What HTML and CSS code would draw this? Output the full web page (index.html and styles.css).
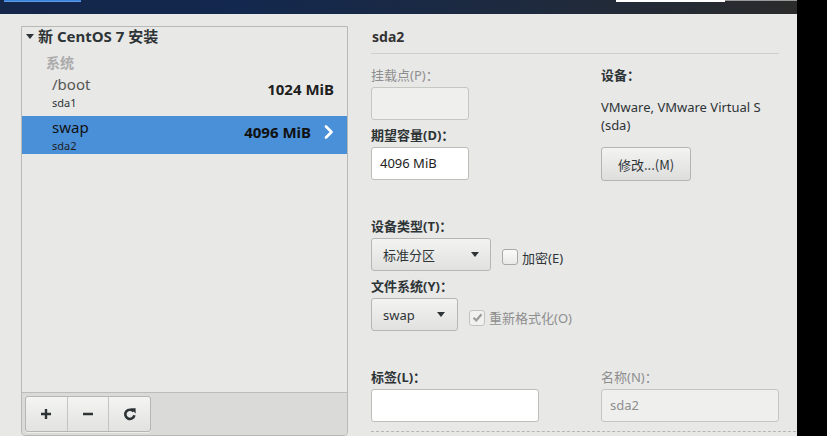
FILE: index.html
```html
<!DOCTYPE html>
<html lang="zh">
<head>
<meta charset="utf-8">
<title>手动分区</title>
<link rel="stylesheet" href="styles.css">
</head>
<body>
<div class="screen">
  <div class="app">
    <div class="topbar">
      <div class="top-btn"></div>
      <div class="top-spacer"></div>
      <div class="top-field"></div>
      <div class="top-grey"></div>
    </div>
    <div class="main">
      <div class="side">
        <div class="tree">
          <div class="tree-head"><span class="tri"></span><span>新 CentOS 7 安装</span></div>
          <div class="group">系统</div>
          <div class="row">
            <div class="row-names">
              <div class="mount">/boot</div>
              <div class="dev">sda1</div>
            </div>
            <div class="size">1024 MiB</div>
          </div>
          <div class="row selected">
            <div class="row-names">
              <div class="mount">swap</div>
              <div class="dev">sda2</div>
            </div>
            <div class="size">4096 MiB</div>
            <svg class="chev" width="10" height="14" viewBox="0 0 10 14"><path d="M2 1.5 L7.5 7 L2 12.5" fill="none" stroke="#fff" stroke-width="2.6" stroke-linecap="round" stroke-linejoin="round"/></svg>
          </div>
        </div>
        <div class="toolbar">
          <div class="tool-group">
            <button class="tool"><svg width="12" height="12" viewBox="0 0 12 12"><path d="M6 1V11M1 6H11" stroke="#2e3436" stroke-width="2.4"/></svg></button>
            <button class="tool"><svg width="12" height="12" viewBox="0 0 12 12"><path d="M1 6H11" stroke="#2e3436" stroke-width="2.4"/></svg></button>
            <button class="tool"><svg width="14" height="14" viewBox="0 0 14 14"><path d="M10.6 4.6 A4.6 4.6 0 1 0 11.4 8.2" fill="none" stroke="#2e3436" stroke-width="2.6"/><path d="M7.4 1.2 L12.6 1.2 L12.6 6.4 Z" fill="#2e3436"/></svg></button>
          </div>
        </div>
      </div>
      <div class="pane">
        <div class="pane-title">sda2</div>
        <div class="rule"></div>
        <div class="cols cols-top">
          <div class="col-left">
            <div class="label dim">挂载点(P)：</div>
            <div class="entry disabled short"></div>
            <div class="label bold gap-s">期望容量(D)：</div>
            <div class="entry short">4096 MiB</div>
          </div>
          <div class="col-right">
            <div class="label bold">设备：</div>
            <div class="device-text">VMware, VMware Virtual S<br>(sda)</div>
            <button class="btn modify">修改...(M)</button>
          </div>
        </div>
        <div class="label bold gap-l">设备类型(T)：</div>
        <div class="line">
          <div class="combo combo-type"><span>标准分区</span><span class="arrow"></span></div>
          <label class="check"><span class="box"></span><span>加密(E)</span></label>
        </div>
        <div class="label bold gap-s">文件系统(Y)：</div>
        <div class="line">
          <div class="combo combo-fs"><span>swap</span><span class="arrow"></span></div>
          <label class="check disabled"><span class="box checked"><svg width="13" height="13" viewBox="0 0 13 13"><path d="M2.5 6.8 L5.3 9.5 L10.5 3.3" fill="none" stroke="#9a9a9a" stroke-width="2.2"/></svg></span><span>重新格式化(O)</span></label>
        </div>
        <div class="cols gap-l2">
          <div class="col-left">
            <div class="label bold">标签(L)：</div>
            <div class="entry medium"></div>
          </div>
          <div class="col-right">
            <div class="label dim">名称(N)：</div>
            <div class="entry disabled wide">sda2</div>
          </div>
        </div>
        <div class="dashed"></div>
      </div>
    </div>
  </div>
  <div class="blackbar"></div>
</div>
</body>
</html>
```
FILE: styles.css
```css
* { box-sizing: border-box; }
html, body {
  margin: 0;
  padding: 0;
  width: 827px;
  height: 436px;
  overflow: hidden;
}
body {
  font-family: "Noto Sans", "Noto Sans CJK SC", sans-serif;
  color: #2e3436;
  background: #000;
}
.screen {
  display: flex;
  width: 827px;
  height: 436px;
}
.app {
  width: 797px;
  height: 436px;
  background: #e8e8e7;
  display: flex;
  flex-direction: column;
  overflow: hidden;
}
.blackbar {
  width: 30px;
  background: #000;
}
.topbar {
  height: 14px;
  flex: none;
  display: flex;
  align-items: flex-start;
  background: linear-gradient(90deg, #14264a 0%, #13284e 30%, #1f2a3c 70%, #2b2b2b 100%);
}
.top-btn {
  margin-left: 4px;
  width: 77px;
  height: 2px;
  background: #3a82d8;
  border-bottom: 1px solid #5a9ae6;
}
.top-spacer { flex: 1; }
.top-field {
  width: 109px;
  height: 2px;
  background: #fff;
}
.top-grey {
  width: 72px;
  height: 1px;
  background: #9a9a9a;
}
.main {
  flex: 1;
  display: flex;
  align-items: flex-start;
}
.side {
  margin-left: 21px;
  margin-top: 12px;
  width: 327px;
  height: 410px;
  border: 1px solid #b8b8b6;
  border-radius: 0 0 4px 4px;
  display: flex;
  flex-direction: column;
  background: #e8e8e7;
}
.tree { flex: 1; }
.tree-head {
  height: 20px;
  margin-top: -1px;
  display: flex;
  align-items: center;
  font-size: 15px;
  font-weight: 700;
  line-height: 20px;
  padding-left: 4px;
}
.tri {
  width: 0;
  height: 0;
  border-left: 4.5px solid transparent;
  border-right: 4.5px solid transparent;
  border-top: 5px solid #2e3436;
  margin-right: 4px;
}
.group {
  margin-top: 7px;
  padding-left: 24px;
  font-size: 14px;
  font-weight: 700;
  color: #ababab;
  line-height: 20px;
}
.row {
  display: flex;
  align-items: flex-start;
  height: 43px;
  padding: 2px 13px 0 30px;
}
.row-names { flex: 1; }
.mount {
  font-size: 15px;
  line-height: 19px;
  color: #555753;
}
.dev {
  font-size: 11px;
  line-height: 15px;
  color: #2e3436;
  margin-top: 1px;
}
.size {
  font-size: 15px;
  font-weight: 700;
  line-height: 20px;
  margin-top: 4px;
  color: #1e1e1e;
}
.selected {
  height: 38px;
  background: #4a90d9;
}
.selected .mount { color: #111; }
.selected .dev { color: #1e1e1e; }
.selected .size { margin-right: 13px; color: #111; }
.chev { display: block; margin-top: 7px; }
.toolbar {
  height: 43px;
  border-top: 1px solid #bcbcba;
  background: #dadad9;
  padding: 3px 0 0 3px;
  border-radius: 0 0 4px 4px;
}
.tool-group {
  display: flex;
  width: 126px;
  height: 36px;
  border: 1px solid #b6b6b4;
  border-radius: 3px;
  overflow: hidden;
  background: linear-gradient(#f4f4f3, #e2e2e1);
  box-shadow: 0 1px 0 rgba(255,255,255,0.5);
}
.tool {
  flex: 1;
  border: 0;
  border-right: 1px solid #c4c4c2;
  background: transparent;
  display: flex;
  align-items: center;
  justify-content: center;
  padding: 0;
}
.tool:last-child { border-right: 0; }
.pane {
  margin-left: 23px;
  width: 425px;
  display: flex;
  flex-direction: column;
}
.pane-title {
  margin-top: 14px;
  font-size: 14px;
  font-weight: 700;
  line-height: 18px;
  color: #333;
  padding-left: 1px;
}
.rule {
  margin-top: 7px;
  width: 408px;
  height: 1px;
  background: #cfcfcd;
}
.cols { display: flex; }
.cols-top { margin-top: 12px; }
.col-left { width: 230px; display: flex; flex-direction: column; }
.col-right { flex: 1; display: flex; flex-direction: column; }
.label {
  font-size: 13px;
  line-height: 18px;
  height: 18px;
  margin-bottom: 3px;
  white-space: nowrap;
}
.bold { font-weight: 700; color: #2e3436; }
.dim { color: #8e8e8e; }
.gap-s { margin-top: 6px; }
.gap-l { margin-top: 36px; }
.gap-l2 { margin-top: 37px; }
.entry {
  height: 33px;
  border: 1px solid #bdbdbb;
  border-radius: 3px;
  background: #fff;
  font-size: 13px;
  line-height: 31px;
  padding-left: 8px;
  color: #222;
}
.entry.disabled {
  background: #efefee;
  color: #8e8e8e;
  border-color: #c6c6c4;
}
.short { width: 98px; }
.medium { width: 168px; }
.wide { width: 178px; }
.device-text {
  margin-top: 11px;
  font-size: 13px;
  line-height: 18px;
  color: #2e3436;
}
.btn {
  margin-top: 13px;
  width: 90px;
  height: 34px;
  border: 1px solid #b4b4b2;
  border-radius: 3px;
  background: linear-gradient(#f3f3f2, #dededd);
  font-family: "Noto Sans CJK SC", "Noto Sans", sans-serif;
  font-size: 13px;
  color: #2e3436;
  padding: 0;
}
.line {
  display: flex;
  align-items: center;
}
.combo {
  height: 33px;
  border: 1px solid #b6b6b4;
  border-radius: 3px;
  background: linear-gradient(#f3f3f2, #e1e1e0);
  display: flex;
  align-items: center;
  justify-content: space-between;
  font-size: 13px;
  color: #2e3436;
}
.combo-type { width: 120px; padding: 0 11px 0 11px; }
.combo-fs { width: 87px; padding: 0 12px 0 11px; }
.arrow {
  width: 0;
  height: 0;
  border-left: 4.5px solid transparent;
  border-right: 4.5px solid transparent;
  border-top: 5px solid #2e3436;
}
.check {
  display: flex;
  align-items: center;
  font-size: 13px;
  margin-left: 11px;
  margin-top: 5px;
  color: #2e3436;
}
.box {
  width: 16px;
  height: 16px;
  border: 1px solid #a9a9a7;
  border-radius: 3px;
  background: linear-gradient(#fbfbfb, #e9e9e8);
  margin-right: 4px;
  display: flex;
  align-items: center;
  justify-content: center;
}
.check.disabled { color: #8e8e8e; margin-left: 11px; margin-top: 6px; }
.check.disabled .box { border-color: #c2c2c0; background: #f1f1f0; }
.dashed {
  margin-top: 9px;
  width: 425px;
  border-top: 1px dashed #b5b5b3;
}
```
